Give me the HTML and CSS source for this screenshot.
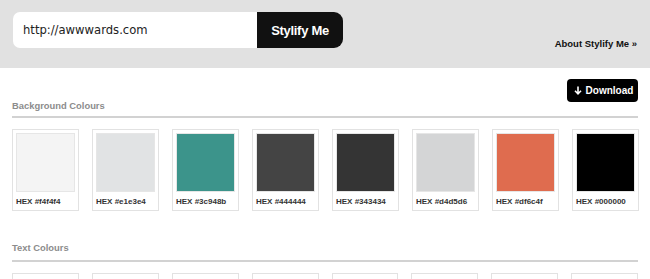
FILE: index.html
```html
<!DOCTYPE html>
<html lang="en">
<head>
  <meta charset="UTF-8">
  <title>Stylify Me</title>
  <link rel="stylesheet" href="styles.css">
</head>
<body>
  <div class="header">
    <form class="search">
      <input class="url" type="text" value="http://awwwards.com">
      <button class="go" type="button">Stylify Me</button>
    </form>
    <a class="about" href="#">About Stylify Me &raquo;</a>
  </div>

  <div class="main">
    <div class="section">
      <div class="section-head">
        <h2>Background Colours</h2>
        <button class="download" type="button">
          <svg width="8" height="9" viewBox="0 0 8 9"><path d="M4 0.5V7.5M1 4.8L4 7.8L7 4.8" fill="none" stroke="#fff" stroke-width="1.6"/></svg>
          Download
        </button>
      </div>
      <div class="swatches">
        <div class="card"><div class="chip" style="background:#f4f4f4"></div><span>HEX #f4f4f4</span></div>
        <div class="card"><div class="chip" style="background:#e1e3e4"></div><span>HEX #e1e3e4</span></div>
        <div class="card"><div class="chip" style="background:#3c948b"></div><span>HEX #3c948b</span></div>
        <div class="card"><div class="chip" style="background:#444444"></div><span>HEX #444444</span></div>
        <div class="card"><div class="chip" style="background:#343434"></div><span>HEX #343434</span></div>
        <div class="card"><div class="chip" style="background:#d4d5d6"></div><span>HEX #d4d5d6</span></div>
        <div class="card"><div class="chip" style="background:#df6c4f"></div><span>HEX #df6c4f</span></div>
        <div class="card"><div class="chip" style="background:#000000"></div><span>HEX #000000</span></div>
      </div>
    </div>

    <div class="section second">
      <div class="section-head">
        <h2>Text Colours</h2>
      </div>
      <div class="swatches">
        <div class="card"></div>
        <div class="card"></div>
        <div class="card"></div>
        <div class="card"></div>
        <div class="card"></div>
        <div class="card"></div>
        <div class="card"></div>
        <div class="card"></div>
      </div>
    </div>
  </div>
</body>
</html>
```

FILE: styles.css
```css
body {
  margin: 0;
  background: #ffffff;
  font-family: "Liberation Sans", Arial, sans-serif;
  overflow: hidden;
}

.header {
  height: 68px;
  background: #e1e1e1;
  display: flex;
  justify-content: space-between;
  align-items: flex-start;
  padding: 12px 13px 0 13px;
  box-sizing: border-box;
}

.search {
  display: flex;
  margin: 0;
}

.url {
  width: 244px;
  height: 36px;
  box-sizing: border-box;
  border: 0;
  border-radius: 7px 0 0 7px;
  background: #fff;
  padding: 0 0 0 10px;
  font-family: "DejaVu Sans", sans-serif;
  font-size: 11.6px;
  color: #222;
  outline: none;
}

.go {
  width: 86px;
  height: 36px;
  border: 0;
  border-radius: 0 9px 9px 0;
  background: #111;
  color: #fff;
  font-family: "Liberation Sans", Arial, sans-serif;
  font-weight: bold;
  font-size: 13px;
  letter-spacing: -0.3px;
  padding: 0;
}

.about {
  margin-top: 26px;
  font-size: 9.5px;
  font-weight: bold;
  color: #111;
  text-decoration: none;
}

.main {
  padding: 11px 12px 0 12px;
}

.section-head {
  display: flex;
  justify-content: space-between;
  align-items: flex-end;
  padding-bottom: 4px;
  border-bottom: 2px solid #d2d2d2;
}

h2 {
  margin: 0;
  font-size: 9.4px;
  line-height: 12px;
  color: #8c8c8c;
  font-weight: bold;
}

.download {
  width: 71px;
  height: 23px;
  margin-bottom: 10px;
  border: 0;
  border-radius: 4px;
  background: #000;
  color: #fff;
  font-family: "Liberation Sans", Arial, sans-serif;
  font-weight: bold;
  font-size: 10px;
  padding: 0 0 0 2px;
  display: flex;
  align-items: center;
  justify-content: center;
  gap: 4px;
}

.swatches {
  display: flex;
  gap: 13px;
  margin-top: 11px;
}

.card {
  width: 67px;
  height: 82px;
  box-sizing: border-box;
  border: 1px solid #e2e2e2;
  padding: 3px;
  display: flex;
  flex-direction: column;
}

.chip {
  width: 59px;
  height: 59px;
  box-sizing: border-box;
  border: 1px solid #e6e6e6;
}

.card span {
  margin-top: 5px;
  font-size: 8px;
  font-weight: bold;
  color: #333;
  white-space: nowrap;
}

.second {
  margin-top: 31px;
}

.second .section-head {
  padding-bottom: 6px;
}
```
